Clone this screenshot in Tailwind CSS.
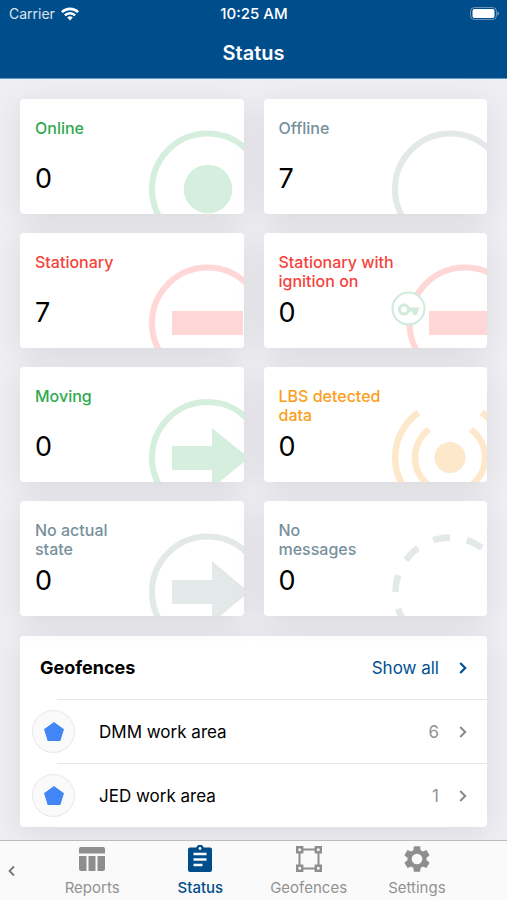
<!DOCTYPE html>
<html lang="en">
<head>
<meta charset="utf-8">
<meta name="viewport" content="width=device-width, initial-scale=1">
<title>Status</title>
<script src="https://cdn.jsdelivr.net/npm/@tailwindcss/browser@4"></script>
</head>
<body class="flex min-h-screen flex-col bg-[#efeff3] font-['Inter','Liberation_Sans',sans-serif] text-black">
<header class="relative z-10 border-b border-[#5b9bd0] bg-[#004d8c] text-white">
  <div class="grid h-7 grid-cols-3 items-center pr-2 pl-[9px] text-[14px] leading-5">
    <div class="flex items-center gap-[6px]">
      <span class="text-white/85">Carrier</span>
      <svg class="h-[14px] w-[18px]" viewBox="0 0 18 14" fill="none" stroke="#fff" stroke-width="2.6" aria-hidden="true">
        <path d="M.9 5.200A11.500 11.500 0 0 1 17.100 5.200"/><path d="M3.900 8.300a7.200 7.200 0 0 1 10.200 0"/><path d="M9 13.500 6.200 10.600a4 4 0 0 1 5.600 0z" fill="#fff" stroke="none"/>
      </svg>
    </div>
    <span class="text-center text-[15px] font-medium">10:25 AM</span>
    <svg class="h-[14px] w-[30px] justify-self-end" viewBox="0 0 30 14" aria-hidden="true">
      <rect x="1.500" y=".5" width="26" height="12" rx="4" fill="none" stroke="#fff" stroke-opacity=".4"/><rect x="3.500" y="2" width="22" height="9" rx="2" fill="#fff"/><path d="M28.500 4.500q1.500.6 1.500 2t-1.500 2z" fill="#fff" fill-opacity=".5"/>
    </svg>
  </div>
  <h1 class="h-[50px] pt-[11px] text-center text-[20px] leading-7 font-semibold">Status</h1>
</header>

<main class="flex flex-1 flex-col gap-5 px-5 pt-5 pb-3">
  <div class="grid grid-cols-2 gap-x-5 gap-y-[19px] text-[16px] leading-[19px] font-medium">
    <a href="#online" class="relative h-[115px] overflow-hidden rounded-[4px] bg-white px-[15px] pt-5 shadow-[0_6px_32px_rgb(0_0_0/0.09)]">
      <svg class="absolute right-0 bottom-0 h-[84px] w-24" viewBox="0 0 96 84" aria-hidden="true"><circle cx="59.500" cy="59" r="55.500" fill="none" stroke="#d5eedd" stroke-width="6"/><circle cx="60" cy="59" r="24.300" fill="#d5eedd"/></svg>
      <div class="relative min-h-[38px] text-[#30ab50]">Online</div>
      <div class="relative mt-1 text-[27px] leading-9 font-normal">0</div>
    </a>
    <a href="#offline" class="relative h-[115px] overflow-hidden rounded-[4px] bg-white px-[15px] pt-5 shadow-[0_6px_32px_rgb(0_0_0/0.09)]">
      <svg class="absolute right-0 bottom-0 h-[84px] w-24" viewBox="0 0 96 84" aria-hidden="true"><circle cx="59.500" cy="59" r="55.500" fill="none" stroke="#e3e8e9" stroke-width="6"/></svg>
      <div class="relative min-h-[38px] text-[#78909c]">Offline</div>
      <div class="relative mt-1 text-[27px] leading-9 font-normal">7</div>
    </a>
    <a href="#stationary" class="relative h-[115px] overflow-hidden rounded-[4px] bg-white px-[15px] pt-5 shadow-[0_6px_32px_rgb(0_0_0/0.09)]">
      <svg class="absolute right-0 bottom-0 h-[84px] w-24" viewBox="0 0 96 84" aria-hidden="true"><circle cx="59.500" cy="59" r="55.500" fill="none" stroke="#fed7d6" stroke-width="6"/><path d="M24 47h71v24H24z" fill="#fed7d6"/></svg>
      <div class="relative min-h-[38px] text-[#f4433c]">Stationary</div>
      <div class="relative mt-1 text-[27px] leading-9 font-normal">7</div>
    </a>
    <a href="#ignition" class="relative h-[115px] overflow-hidden rounded-[4px] bg-white px-[15px] pt-5 shadow-[0_6px_32px_rgb(0_0_0/0.09)]">
      <svg class="absolute right-0 bottom-0 h-[84px] w-24" viewBox="0 0 96 84" aria-hidden="true"><circle cx="74" cy="59" r="55.500" fill="none" stroke="#fed7d6" stroke-width="6"/><path d="M38 47h58v24H38z" fill="#fed7d6"/><circle cx="17.500" cy="44.500" r="16" fill="#fff" stroke="#d0eadb" stroke-width="2"/><path transform="translate(6 33.500)" fill="#d0eadb" d="M12.650 10C11.830 7.670 9.610 6 7 6c-3.310 0-6 2.690-6 6s2.690 6 6 6c2.610 0 4.830-1.670 5.650-4H15l1.500 3.500h3L21 14l2-4H12.650zM7 15a3 3 0 1 1 0-6 3 3 0 0 1 0 6z"/></svg>
      <div class="relative min-h-[38px] text-[#f4433c]">Stationary with<br>ignition on</div>
      <div class="relative mt-1 text-[27px] leading-9 font-normal">0</div>
    </a>
    <a href="#moving" class="relative h-[115px] overflow-hidden rounded-[4px] bg-white px-[15px] pt-5 shadow-[0_6px_32px_rgb(0_0_0/0.09)]">
      <svg class="absolute right-0 bottom-0 h-[84px] w-24" viewBox="0 0 96 84" aria-hidden="true"><circle cx="59.500" cy="59.500" r="55.500" fill="none" stroke="#d5eedd" stroke-width="6"/><path d="M24 48h40V30l37 30-37 30V72H24z" fill="#d5eedd"/></svg>
      <div class="relative min-h-[38px] text-[#30ab50]">Moving</div>
      <div class="relative mt-1 text-[27px] leading-9 font-normal">0</div>
    </a>
    <a href="#lbs" class="relative h-[115px] overflow-hidden rounded-[4px] bg-white px-[15px] pt-5 shadow-[0_6px_32px_rgb(0_0_0/0.09)]">
      <svg class="absolute right-0 bottom-0 h-[84px] w-24" viewBox="0 0 96 84" aria-hidden="true"><circle cx="59" cy="59.500" r="15.500" fill="#fee8cb"/><path d="M38 31.500a35 35 0 0 0 0 56M80 31.500a35 35 0 0 1 0 56M27.500 14.500a55 55 0 0 0 0 90M90.500 14.500a55 55 0 0 1 0 90" fill="none" stroke="#fee8cb" stroke-width="6.500"/></svg>
      <div class="relative min-h-[38px] text-[#fb9e1b]">LBS detected<br>data</div>
      <div class="relative mt-1 text-[27px] leading-9 font-normal">0</div>
    </a>
    <a href="#no-state" class="relative h-[115px] overflow-hidden rounded-[4px] bg-white px-[15px] pt-5 shadow-[0_6px_32px_rgb(0_0_0/0.09)]">
      <svg class="absolute right-0 bottom-0 h-[84px] w-24" viewBox="0 0 96 84" aria-hidden="true"><circle cx="59.500" cy="60" r="55.500" fill="none" stroke="#e3e8e9" stroke-width="6"/><path d="M24 48h40V29l37 31-37 31V72H24z" fill="#e3e8e9"/></svg>
      <div class="relative min-h-[38px] text-[#78909c]">No actual<br>state</div>
      <div class="relative mt-1 text-[27px] leading-9 font-normal">0</div>
    </a>
    <a href="#no-messages" class="relative h-[115px] overflow-hidden rounded-[4px] bg-white px-[15px] pt-5 shadow-[0_6px_32px_rgb(0_0_0/0.09)]">
      <svg class="absolute right-0 bottom-0 h-[84px] w-24" viewBox="0 0 96 84" aria-hidden="true"><circle cx="59" cy="60" r="54.500" fill="none" stroke="#e3e8e9" stroke-width="6.500" pathLength="360" stroke-dasharray="18 18" stroke-dashoffset="9" transform="rotate(-99 59 60)"/></svg>
      <div class="relative min-h-[38px] text-[#78909c]">No<br>messages</div>
      <div class="relative mt-1 text-[27px] leading-9 font-normal">0</div>
    </a>
  </div>

  <section class="rounded-[4px] bg-white text-[17px] leading-6 shadow-[0_6px_32px_rgb(0_0_0/0.09)]">
    <div class="flex h-[63px] items-center justify-between pr-5 pl-5">
      <h2 class="text-[18px] font-bold">Geofences</h2>
      <a href="#geofences" class="flex items-center gap-5 text-[#005093]">Show all
        <svg class="h-3 w-2" viewBox="0 0 8 12" fill="none" stroke="currentColor" stroke-width="2.200" aria-hidden="true"><path d="m1.200 1 5 5-5 5"/></svg>
      </a>
    </div>
    <div class="ml-[37px] h-px bg-[#e6e6e6]"></div>
    <a href="#dmm" class="flex h-[63px] items-center pr-5 pl-3">
      <span class="flex size-[43px] items-center justify-center rounded-full border border-[#e8e8e8] bg-[#fafafa]"><svg class="h-[19px] w-5" viewBox="0 0 20 19" fill="#4285f4" aria-hidden="true"><path d="M10 0 20 7.300 16.300 19H3.700L0 7.300z"/></svg></span>
      <span class="ml-6 flex-1">DMM work area</span>
      <span class="mr-5 text-[#929292]">6</span>
      <svg class="h-3 w-2" viewBox="0 0 8 12" fill="none" stroke="#8a8a8a" stroke-width="2" aria-hidden="true"><path d="m1.200 1 5 5-5 5"/></svg>
    </a>
    <div class="ml-[37px] h-px bg-[#e6e6e6]"></div>
    <a href="#jed" class="flex h-[63px] items-center pr-5 pl-3">
      <span class="flex size-[43px] items-center justify-center rounded-full border border-[#e8e8e8] bg-[#fafafa]"><svg class="h-[19px] w-5" viewBox="0 0 20 19" fill="#4285f4" aria-hidden="true"><path d="M10 0 20 7.300 16.300 19H3.700L0 7.300z"/></svg></span>
      <span class="ml-6 flex-1">JED work area</span>
      <span class="mr-5 text-[#929292]">1</span>
      <svg class="h-3 w-2" viewBox="0 0 8 12" fill="none" stroke="#8a8a8a" stroke-width="2" aria-hidden="true"><path d="m1.200 1 5 5-5 5"/></svg>
    </a>
  </section>
</main>

<nav class="relative z-10 flex h-[60px] border-t border-[#bcbcc0] bg-[#fafafa] pr-9 text-[15px] leading-5 text-[#929292]">
  <button type="button" aria-label="Back" class="flex w-[38px] items-center pl-2"><svg class="h-3 w-[7px]" viewBox="0 0 7 12" fill="none" stroke="#777" stroke-width="1.800" aria-hidden="true"><path d="m6 1.500-4.500 4.500 4.500 4.500"/></svg></button>
  <a href="#reports" class="flex flex-1 flex-col items-center gap-[5px] pt-1">
    <svg class="size-7" viewBox="0 0 28 28" fill="#8e8e8e" aria-hidden="true"><path d="M3 2h22q2 0 2 2v4.500H1V4q0-2 2-2zM1 11h7.500v15H3q-2 0-2-2zM10.500 11h7v15h-7zM19.500 11H27v13q0 2-2 2h-5.500z"/></svg>
    <span>Reports</span>
  </a>
  <a href="#status" class="flex flex-1 flex-col items-center gap-[5px] pt-1 text-[#004d8c]">
    <svg class="size-7" viewBox="0 0 28 28" aria-hidden="true"><path d="M4 2.500h6.200a4 4 0 0 1 7.600 0H24q2 0 2 2V25q0 2-2 2H4q-2 0-2-2V4.500q0-2 2-2z" fill="#004d8c"/><circle cx="14" cy="3.500" r="1.400" fill="#fafafa"/><path d="M7.500 9h13M7.500 14.500h13M7.500 20h9" stroke="#fafafa" stroke-width="2.600"/></svg>
    <span class="font-medium">Status</span>
  </a>
  <a href="#geofences-tab" class="flex flex-1 flex-col items-center gap-[5px] pt-1">
    <svg class="size-7" viewBox="0 0 28 28" fill="none" stroke="#8e8e8e" stroke-width="2" aria-hidden="true"><path d="M8 4.500h12M8 23.500h12M4.500 8v12M23.500 8v12"/><path stroke-width="2.400" d="M2.200 2.200h5v5h-5zM20.800 2.200h5v5h-5zM2.200 20.800h5v5h-5zM20.800 20.800h5v5h-5z"/></svg>
    <span>Geofences</span>
  </a>
  <a href="#settings" class="flex flex-1 flex-col items-center gap-[5px] pt-1">
    <svg class="size-7" viewBox="1 1 22 22" fill="#8e8e8e" aria-hidden="true"><path fill-rule="evenodd" d="M19.430 12.980c.04-.32.07-.64.07-.98s-.03-.66-.07-.98l2.110-1.650c.19-.15.24-.42.12-.64l-2-3.460c-.12-.22-.39-.3-.61-.22l-2.490 1c-.52-.4-1.080-.73-1.690-.98l-.38-2.650C14.460 2.180 14.250 2 14 2h-4c-.25 0-.46.18-.49.42l-.38 2.650c-.61.25-1.170.59-1.690.98l-2.490-1c-.23-.09-.49 0-.61.22l-2 3.460c-.13.22-.07.49.12.64l2.110 1.650c-.04.32-.07.65-.07.98s.03.66.07.98l-2.110 1.650c-.19.15-.24.42-.12.64l2 3.460c.12.22.39.3.61.22l2.490-1c.52.4 1.080.73 1.690.98l.38 2.650c.03.24.24.42.49.42h4c.25 0 .46-.18.49-.42l.38-2.650c.61-.25 1.170-.59 1.690-.98l2.490 1c.23.09.49 0 .61-.22l2-3.460c.12-.22.07-.49-.12-.64l-2.110-1.650zM12 16.200a4.200 4.200 0 1 1 0-8.400 4.200 4.200 0 0 1 0 8.400z"/></svg>
    <span>Settings</span>
  </a>
</nav>
</body>
</html>
